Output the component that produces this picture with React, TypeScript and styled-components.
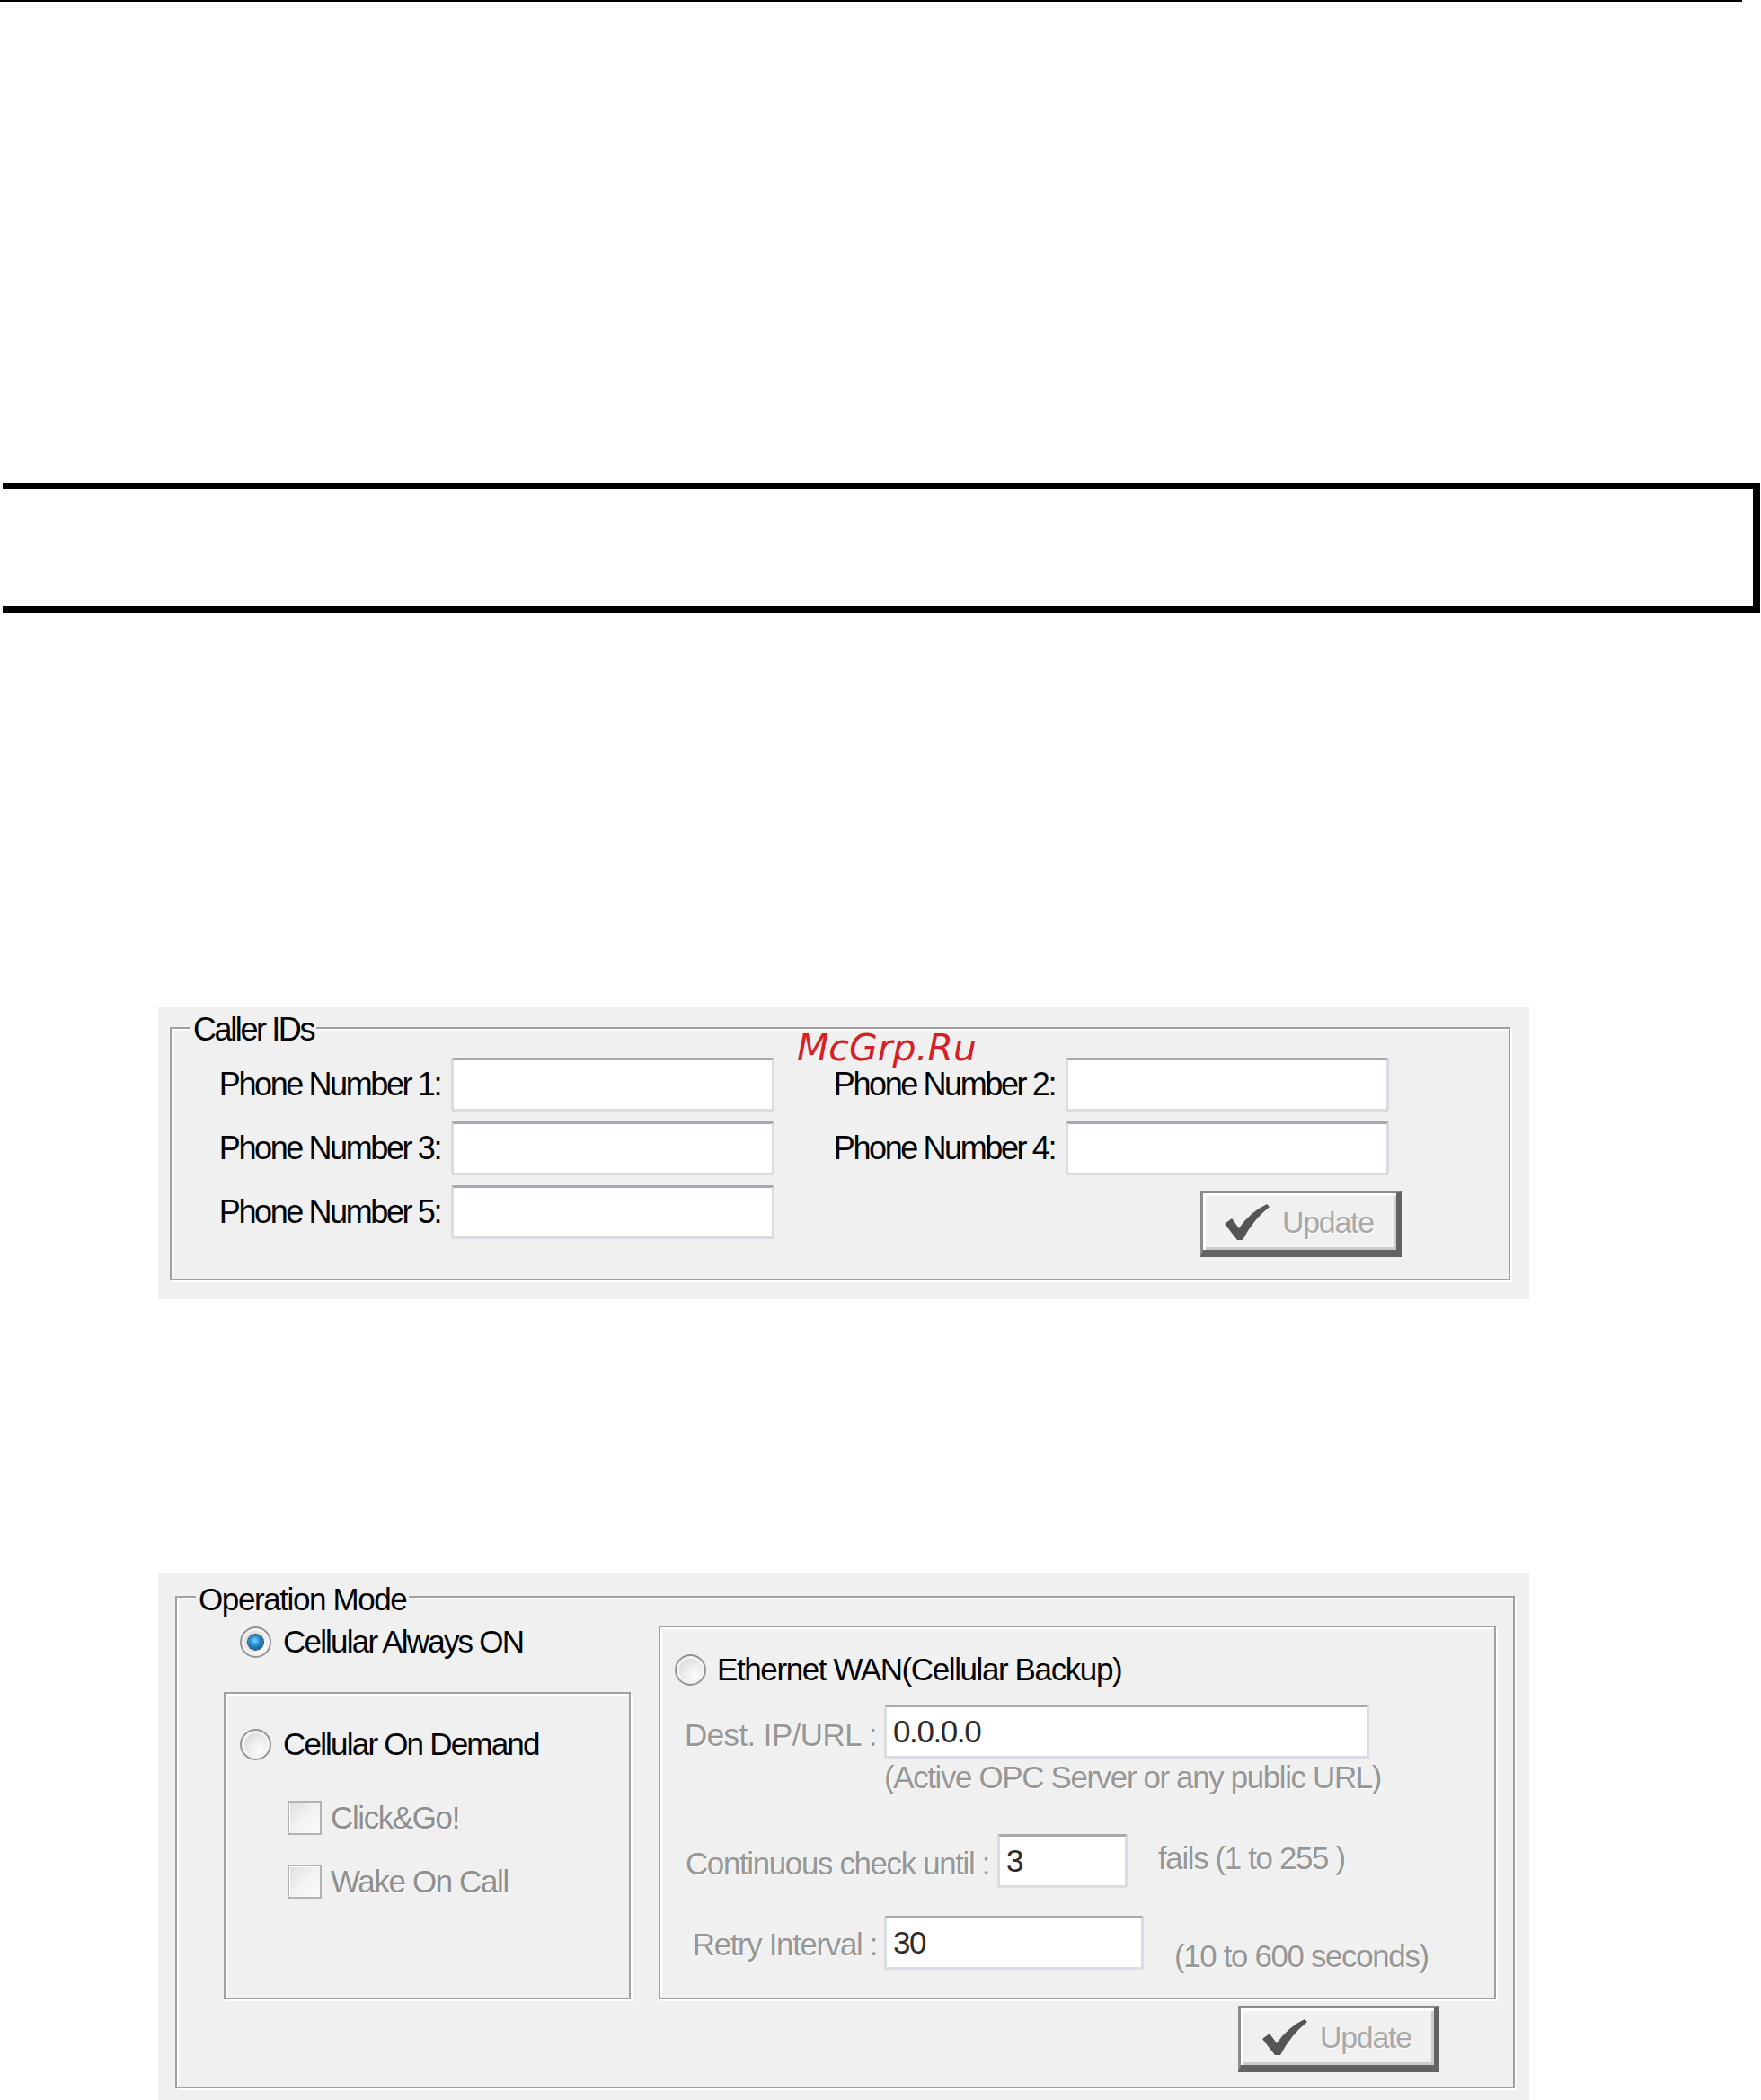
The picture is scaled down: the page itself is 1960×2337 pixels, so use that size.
import styled, { createGlobalStyle, css } from 'styled-components';

const GlobalStyle = createGlobalStyle`
  *, *::before, *::after { box-sizing: border-box; }
  html, body { margin: 0; padding: 0; background: #fff; }
  body { font-family: "Liberation Sans", Arial, sans-serif; }
`;

// two text faces: the caller-id dialog is drawn tighter than the mode dialog
const narrowFace = css`
  font-family: "Liberation Sans", Arial, sans-serif;
  font-size: 36px;
  letter-spacing: -2.4px;
`;

const dialogFace = css`
  font-family: "Liberation Sans", Arial, sans-serif;
  font-size: 35px;
  letter-spacing: -1.4px;
`;

const Page = styled.div`
  width: 1960px;
  height: 2337px;
  overflow: hidden;
  background: #fff;
`;

const TopRule = styled.div`
  width: 1939px;
  height: 2px;
  background: #000;
`;

const NoteFrame = styled.div`
  margin: 535px 0 0 3px;
  width: 1956px;
  height: 145px;
  border-top: 7px solid #000;
  border-right: 8px solid #000;
  border-bottom: 8px solid #000;
`;

const Panel = styled.section<{ $top: number; $pad: string; $narrow?: boolean }>`
  position: relative;
  width: 1526px;
  margin: ${p => p.$top}px 0 0 176px;
  padding: ${p => p.$pad};
  background: #f0f0f0;
  color: #000;
  ${p => (p.$narrow ? narrowFace : dialogFace)}
`;

const etched = css`
  border: 2px solid #a0a0a0;
  box-shadow: inset 2px 2px 0 #fff, 2px 2px 0 #fff;
`;

const GroupBox = styled.fieldset<{ $bottom: number }>`
  margin: 0;
  min-width: 0;
  padding: 0 0 ${p => p.$bottom}px;
  ${etched}
`;

const Caption = styled.legend<{ $indent: number; $lift: number }>`
  margin-left: ${p => p.$indent}px;
  padding: ${p => p.$lift}px 3px 0;
  line-height: 40px;
  background: #f0f0f0;
`;

const Watermark = styled.span`
  position: absolute;
  z-index: 1;
  left: 711px;
  top: 29px;
  font-family: "DejaVu Sans", sans-serif;
  font-style: italic;
  font-size: 41px;
  line-height: 32px;
  letter-spacing: 0;
  color: #d61f26;
`;

const PhoneGrid = styled.div`
  display: grid;
  grid-template-columns: 260px 360px 300px 360px;
  grid-template-rows: 60px 60px auto;
  column-gap: 12px;
  row-gap: 11px;
  align-items: start;
  margin: 11px 0 0 39px;
`;

const FieldLabel = styled.label`
  margin-top: 10px;
  line-height: 40px;
  text-align: right;
  white-space: nowrap;
`;

const TextBox = styled.input<{ $w?: number }>`
  display: block;
  width: ${p => (p.$w ? `${p.$w}px` : '100%')};
  height: 60px;
  padding: 0 7px;
  border: 3px solid #d9dde3;
  border-top-color: #a7a9af;
  border-radius: 3px;
  background: #fff;
  font: inherit;
  letter-spacing: inherit;
  color: #2b2b2b;
  outline: none;
`;

const UpdateButton = styled.button<{ $cell?: boolean }>`
  display: flex;
  align-items: center;
  gap: 14px;
  width: 224px;
  height: 74px;
  padding: 0 0 0 24px;
  border-style: solid;
  border-width: 3px 6px 8px 3px;
  border-color: #8c8c8c #636363 #636363 #8c8c8c;
  background: #f0f0f0;
  box-shadow: inset 3px 3px 0 #fff, inset -3px -3px 0 #cdcdcd;
  font-family: "Liberation Sans", Arial, sans-serif;
  font-size: 34px;
  letter-spacing: -1.3px;
  line-height: 40px;
  color: #a9a9a9;
  text-shadow: 1px 1px 0 #fff;
  ${p =>
    p.$cell &&
    css`
      grid-column: 4;
      grid-row: 3;
      justify-self: end;
      margin: 6px -14px 0 0;
    `}
`;

const CheckIcon = () => (
  <svg width="50" height="40" viewBox="0 0 50 40">
    <path d="M0 22 L8 16 L16 27 Q28 9 47 0 L50 3 Q32 17 20 40 L14 40 Z" fill="#555" />
  </svg>
);

const ModeGrid = styled.div`
  display: grid;
  grid-template-columns: 453px 932px;
  column-gap: 31px;
  margin: 9px 0 0 52px;
`;

const ModeColumn = styled.div`
  display: flex;
  flex-direction: column;
`;

const SubGroup = styled.div<{ $pad: string; $grow?: boolean }>`
  display: flex;
  flex-direction: column;
  padding: ${p => p.$pad};
  ${p => p.$grow && 'flex: 1;'}
  ${etched}
`;

const OptionRow = styled.div<{ $indent: number; $top?: number; $gap: number; $track?: number }>`
  display: flex;
  align-items: center;
  gap: ${p => p.$gap}px;
  height: 36px;
  margin: ${p => p.$top ?? 0}px 0 0 ${p => p.$indent}px;
  white-space: nowrap;
  ${p => p.$track !== undefined && `letter-spacing: ${p.$track}px;`}
`;

const RadioDot = styled.span<{ $on?: boolean }>`
  position: relative;
  flex: none;
  width: 35px;
  height: 35px;
  border-radius: 50%;
  border: 2px solid #929496;
  background: radial-gradient(circle at 65% 70%, #fdfdfd 0%, #e9e9e9 45%, #cbcbcb 100%);
  box-shadow: inset 0 0 0 3px #f3f3f3;

  ${p =>
    p.$on &&
    css`
      &::after {
        content: "";
        position: absolute;
        inset: 7px;
        border-radius: 50%;
        background: radial-gradient(circle at 45% 40%, #7fd6ff 0%, #2b93d8 35%, #125a97 75%, #0d3f6c 100%);
        box-shadow: 0 0 0 1px #24496d;
      }
    `}
`;

const CheckMark = styled.span`
  flex: none;
  width: 38px;
  height: 38px;
  border: 2px solid #b3b3b3;
  background: linear-gradient(135deg, #dedede 0%, #f2f2f2 50%, #fdfdfd 100%);
  box-shadow: inset 1px 1px 0 #fff;
`;

const Dimmed = styled.span`
  color: #8f8f8f;
  text-shadow: 1px 1px 0 #fff;
`;

const FieldRow = styled.div<{ $top: number }>`
  display: flex;
  align-items: flex-start;
  height: 60px;
  margin-top: ${p => p.$top}px;
`;

const RowLabel = styled.label<{ $w: number; $gap: number; $top: number; $track?: number }>`
  flex: none;
  width: ${p => p.$w}px;
  margin: ${p => p.$top}px ${p => p.$gap}px 0 0;
  line-height: 40px;
  text-align: right;
  white-space: nowrap;
  color: #979797;
  text-shadow: 1px 1px 0 #fff;
  ${p => p.$track !== undefined && `letter-spacing: ${p.$track}px;`}
`;

const Suffix = styled.span<{ $top: number }>`
  margin: ${p => p.$top}px 0 0 34px;
  line-height: 40px;
  white-space: nowrap;
  color: #979797;
  text-shadow: 1px 1px 0 #fff;
`;

const Hint = styled.div`
  margin: 1px 0 0 249px;
  line-height: 40px;
  white-space: nowrap;
  color: #979797;
  text-shadow: 1px 1px 0 #fff;
`;

const ButtonBar = styled.div`
  display: flex;
  justify-content: flex-end;
  margin: 7px 82px 0 0;
`;

const phoneSlots = [1, 2, 3, 4, 5];

export default function App() {
  return (
    <Page>
      <GlobalStyle />
      <TopRule />
      <NoteFrame />

      <Panel $top={439} $pad="0 21px 21px 13px" $narrow>
        <Watermark>McGrp.Ru</Watermark>
        <GroupBox $bottom={24}>
          <Caption $indent={21} $lift={5}>Caller IDs</Caption>
          <PhoneGrid>
            {phoneSlots.map(n => [
              <FieldLabel key={`l${n}`} htmlFor={`phone${n}`}>Phone Number {n}:</FieldLabel>,
              <TextBox key={`i${n}`} id={`phone${n}`} type="text" />,
            ])}
            <UpdateButton type="button" $cell>
              <CheckIcon />
              Update
            </UpdateButton>
          </PhoneGrid>
        </GroupBox>
      </Panel>

      <Panel $top={305} $pad="3px 16px 24px 19px">
        <GroupBox $bottom={16}>
          <Caption $indent={21} $lift={6}>Operation Mode</Caption>
          <ModeGrid>
            <ModeColumn>
              <OptionRow $indent={18} $gap={13} $track={-1.8}>
                <RadioDot $on />
                Cellular Always ON
              </OptionRow>
              <SubGroup $pad="38px 0 0 16px" $grow style={{ marginTop: 38 }}>
                <OptionRow $indent={0} $gap={13} $track={-1.8}>
                  <RadioDot />
                  Cellular On Demand
                </OptionRow>
                <OptionRow $indent={53} $top={46} $gap={10}>
                  <CheckMark />
                  <Dimmed>Click&amp;Go!</Dimmed>
                </OptionRow>
                <OptionRow $indent={53} $top={35} $gap={10}>
                  <CheckMark />
                  <Dimmed>Wake On Call</Dimmed>
                </OptionRow>
              </SubGroup>
            </ModeColumn>

            <SubGroup $pad="29px 0 31px 0">
              <OptionRow $indent={16} $gap={12}>
                <RadioDot />
                Ethernet WAN(Cellular Backup)
              </OptionRow>
              <FieldRow $top={21}>
                <RowLabel $w={241} $gap={8} $top={14} $track={-0.6} htmlFor="dest">Dest. IP/URL :</RowLabel>
                <TextBox id="dest" $w={540} defaultValue="0.0.0.0" />
              </FieldRow>
              <Hint>(Active OPC Server or any public URL)</Hint>
              <FieldRow $top={43}>
                <RowLabel $w={366} $gap={9} $top={13} htmlFor="fails">Continuous check until :</RowLabel>
                <TextBox id="fails" $w={145} defaultValue="3" />
                <Suffix $top={7}>fails (1 to 255 )</Suffix>
              </FieldRow>
              <FieldRow $top={31}>
                <RowLabel $w={241} $gap={8} $top={12} htmlFor="retry">Retry Interval :</RowLabel>
                <TextBox id="retry" $w={289} defaultValue="30" />
                <Suffix $top={25}>(10 to 600 seconds)</Suffix>
              </FieldRow>
            </SubGroup>
          </ModeGrid>
          <ButtonBar>
            <UpdateButton type="button">
              <CheckIcon />
              Update
            </UpdateButton>
          </ButtonBar>
        </GroupBox>
      </Panel>
    </Page>
  );
}
